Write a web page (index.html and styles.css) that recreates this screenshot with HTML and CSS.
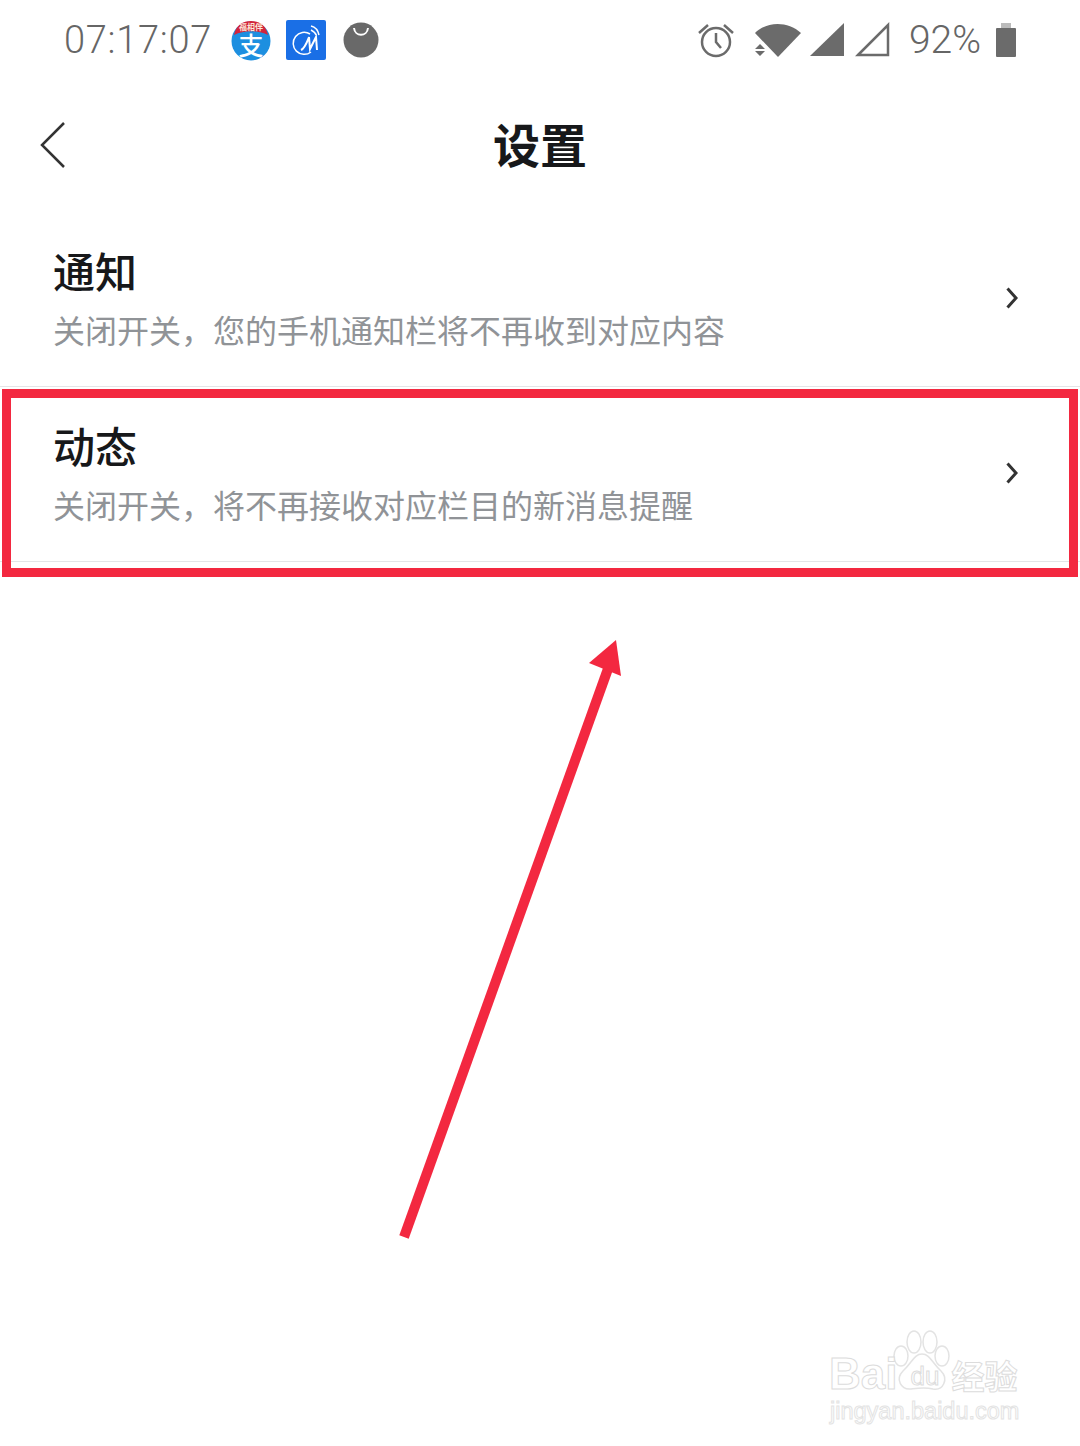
FILE: index.html
```html
<!DOCTYPE html>
<html lang="zh-CN">
<head>
    <meta charset="UTF-8">
    <title>设置</title>
    <link rel="stylesheet" href="styles.css">
</head>
<body>

<div class="screen">
    <div class="status-bar">
        <div class="status-left">
            <span class="time">07:17:07</span>
            <svg class="app-icon" width="40" height="40" viewBox="0 0 40 40">
                <circle cx="20" cy="21" r="19.500" fill="#1d8fe0"/>
                <path d="M3 15C5 5 12 1 20 1s15 4 17 14c-10-5-24-5-34 0z" fill="#d3243c"/>
                <text class="icon-tag" x="20" y="9.500" text-anchor="middle">福相伴</text>
                <text class="icon-char" x="20" y="35" text-anchor="middle">支</text>
            </svg>
            <svg class="app-icon blue-app" width="40" height="40" viewBox="0 0 40 40">
                <rect width="40" height="40" rx="2" fill="#1a6fe6"/>
                <path d="M24 14a11 11 0 1 0 1 18" fill="none" stroke="#fff" stroke-width="1.500"/>
                <path d="M15 30c4-2 6-8 8-13l1 12 6-12 1 13" fill="none" stroke="#fff" stroke-width="2"/>
                <path d="M25 6c4 1 7 4 8 9M25 10c2 1 4 2 5 5" fill="none" stroke="#fff" stroke-width="1.500"/>
            </svg>
            <svg class="app-icon" width="36" height="36" viewBox="0 0 36 36">
                <circle cx="18" cy="18" r="17.500" fill="#696969"/>
                <path d="M11 6c1 9 13 9 14 0" fill="none" stroke="#fff" stroke-width="2"/>
            </svg>
        </div>
        <div class="status-right">
            <svg class="alarm" width="36" height="36" viewBox="0 0 36 36" fill="none" stroke="#6b6b6b" stroke-width="2.500">
                <circle cx="18" cy="20" r="14"/>
                <path d="M18 11v9l5 6M1 11l9-8M35 11l-9-8"/>
            </svg>
            <svg class="wifi" width="48" height="36" viewBox="0 0 48 36">
                <path d="M1 11C13-1 34-1 47 11L24 35z" fill="#6b6b6b"/>
                <path d="M1 27l5-5 5 5zM1 29h10l-5 5z" fill="#6b6b6b"/>
            </svg>
            <svg class="signal" width="36" height="36" viewBox="0 0 36 36">
                <path d="M1 34L35 1v33z" fill="#6b6b6b"/>
            </svg>
            <svg class="signal-empty" width="36" height="36" viewBox="0 0 36 36">
                <path d="M3 33L33 3v30z" fill="none" stroke="#6b6b6b" stroke-width="2.500"/>
            </svg>
            <span class="battery-text">92%</span>
            <div class="battery">
                <div class="battery-cap"></div>
                <div class="battery-body"></div>
            </div>
        </div>
    </div>

    <div class="header">
        <svg class="back" width="26" height="46" viewBox="0 0 26 46" fill="none" stroke="#333" stroke-width="2.500">
            <path d="M24 1L2 23l22 22"/>
        </svg>
        <h1 class="page-title">设置</h1>
    </div>

    <div class="row">
        <div class="row-text">
            <div class="row-title">通知</div>
            <div class="row-sub">关闭开关，您的手机通知栏将不再收到对应内容</div>
        </div>
        <svg class="chevron" width="12" height="22" viewBox="0 0 12 22" fill="none" stroke="#333" stroke-width="3">
            <path d="M1.500 1.500L10 11l-8.500 9.500"/>
        </svg>
    </div>

    <div class="row">
        <div class="row-text">
            <div class="row-title">动态</div>
            <div class="row-sub">关闭开关，将不再接收对应栏目的新消息提醒</div>
        </div>
        <svg class="chevron" width="12" height="22" viewBox="0 0 12 22" fill="none" stroke="#333" stroke-width="3">
            <path d="M1.500 1.500L10 11l-8.500 9.500"/>
        </svg>
    </div>

    <!-- annotations on top of the screenshot -->
    <div class="mark-box"></div>
    <svg class="mark-arrow" width="240" height="610" viewBox="0 0 240 610">
        <path d="M5 597L210 26" fill="none" stroke="#f32840" stroke-width="10"/>
        <path d="M217 0l5 36-32-13z" fill="#f32840"/>
    </svg>

    <div class="watermark">
        <svg class="paw" width="60" height="62" viewBox="0 0 60 62" fill="#fff" stroke="#e3e3e3" stroke-width="1.500">
            <ellipse cx="9" cy="26" rx="7" ry="10"/>
            <ellipse cx="22" cy="12" rx="7" ry="11"/>
            <ellipse cx="38" cy="12" rx="7" ry="11"/>
            <ellipse cx="50" cy="26" rx="7" ry="10"/>
            <path d="M30 24C22 24 20 33 11 41c-8 8-2 19 8 18 8-1 14-2 22 0 10 2 16-10 8-18C40 33 38 24 30 24z"/>
        </svg>
        <div class="wm-top"><span class="wm-bai">Bai</span><span class="wm-du">du</span><span class="wm-cn">经验</span></div>
        <div class="wm-url">jingyan.baidu.com</div>
    </div>
</div>

</body>
</html>
```
FILE: styles.css
```css
body {
    margin: 0;
    background-color: white;
    font-family: "Noto Sans CJK SC", "Liberation Sans", sans-serif;
}
.screen {
    position: relative;
    width: 1080px;
    height: 1446px;
    overflow: hidden;
    background-color: white;
}
.status-bar {
    height: 80px;
    display: flex;
    justify-content: space-between;
    align-items: center;
    padding: 0 64px;
    color: #666;
}
.status-left, .status-right {
    display: flex;
    align-items: center;
}
.time {
    font-family: Roboto, sans-serif;
    font-size: 38px;
    font-weight: 300;
    letter-spacing: 0.700px;
    margin-right: 19px;
}
.app-icon {
    margin-right: 15px;
    overflow: visible;
}
.blue-app {
    margin-right: 17px;
}
.icon-tag {
    font-size: 8px;
    font-weight: 700;
    fill: #fbe6d8;
}
.icon-char {
    font-size: 25px;
    font-weight: 500;
    fill: white;
}
.alarm {
    margin-right: 20px;
}
.wifi {
    margin-right: 7px;
}
.signal {
    margin-right: 10px;
}
.signal-empty {
    margin-right: 9px;
}
.battery-text {
    font-family: Roboto, sans-serif;
    font-size: 39px;
    font-weight: 300;
    margin: 0 15px 0 9px;
}
.battery {
    width: 20px;
    display: flex;
    flex-direction: column;
    align-items: center;
}
.battery-cap {
    width: 10px;
    height: 5px;
    background-color: #bbb;
}
.battery-body {
    width: 20px;
    height: 29px;
    background-color: #6b6b6b;
    border-radius: 1px;
}
.header {
    height: 132px;
    display: flex;
    align-items: center;
    justify-content: center;
    position: relative;
}
.back {
    position: absolute;
    left: 40px;
    top: 42px;
}
.page-title {
    margin: 0 0 7px;
    font-size: 47px;
    font-weight: 700;
    color: #17181a;
}
.row {
    height: 174px;
    display: flex;
    align-items: center;
    justify-content: space-between;
    padding: 0 62px 0 53px;
    border-bottom: 1px solid #e4e5e7;
}
.row-text {
    display: flex;
    flex-direction: column;
    padding-bottom: 5px;
}
.row-title {
    font-size: 42px;
    line-height: 58px;
    font-weight: 500;
    color: #17181a;
}
.row-sub {
    font-size: 32px;
    line-height: 46px;
    margin-top: 7px;
    color: #909397;
}
.chevron {
    margin-bottom: 2px;
}
.mark-box {
    position: absolute;
    left: 2px;
    top: 389px;
    width: 1076px;
    height: 188px;
    box-sizing: border-box;
    border: 9px solid #f32840;
}
.mark-arrow {
    position: absolute;
    left: 399px;
    top: 640px;
}
.watermark {
    position: absolute;
    left: 829px;
    top: 1330px;
    width: 200px;
    height: 100px;
}
.paw {
    position: absolute;
    left: 63px;
    top: 0;
}
.wm-top {
    position: absolute;
    left: 0;
    top: 22px;
    height: 44px;
    line-height: 44px;
    white-space: nowrap;
    color: white;
    -webkit-text-stroke: 1px #dcdcdc;
}
.wm-bai {
    font-family: "Liberation Sans", sans-serif;
    font-size: 44px;
    font-weight: 700;
}
.wm-du {
    font-family: "Liberation Sans", sans-serif;
    font-size: 26px;
    vertical-align: 4px;
    margin: 0 12px 0 13px;
}
.wm-cn {
    font-size: 33px;
    font-weight: 700;
}
.wm-url {
    position: absolute;
    left: 1px;
    top: 68px;
    height: 26px;
    line-height: 26px;
    font-family: "Liberation Sans", sans-serif;
    font-size: 23.500px;
    color: white;
    white-space: nowrap;
    -webkit-text-stroke: 1px #e3e3e3;
}
```
